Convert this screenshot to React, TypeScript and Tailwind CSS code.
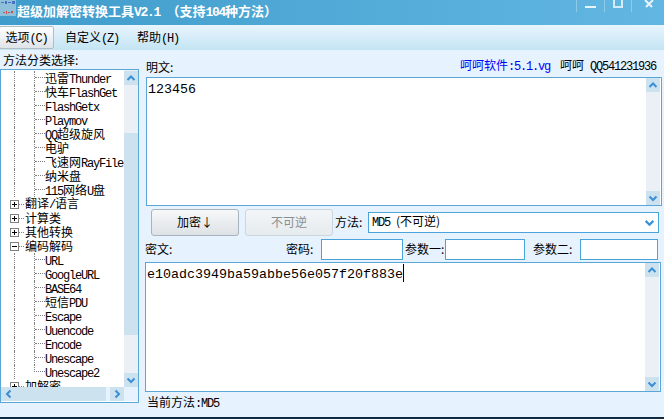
import React from "react";

// latin runs are squeezed to the 6px cell of the old bitmap font
function T({ text, big }: { text: string; big?: boolean }) {
  const parts = text.split(/([\x00-\x7f]+)/).filter(Boolean);
  return (
    <>
      {parts.map((p, i) =>
        /^[\x00-\x7f]+$/.test(p) ? (
          <span
            key={i}
            className={
              big
                ? "[font-family:'Liberation_Mono',monospace] text-[13.33px] whitespace-pre"
                : "[font-family:'Liberation_Mono',monospace] text-[12px] tracking-[-1.2px] whitespace-pre"
            }
          >
            {p}
          </span>
        ) : (
          <span key={i}>{p}</span>
        )
      )}
    </>
  );
}

function Chevron({ dir, size = 10 }: { dir: "up" | "down" | "left" | "right"; size?: number }) {
  const d = {
    up: "M1.5 7 L5 3.5 L8.5 7",
    down: "M1.5 3.5 L5 7 L8.5 3.5",
    left: "M6.5 1.5 L3 5 L6.5 8.5",
    right: "M3.5 1.5 L7 5 L3.5 8.5",
  }[dir];
  return (
    <svg width={size} height={size} viewBox="0 0 10 10" fill="none">
      <path d={d} stroke="#3a8fd6" strokeWidth="2" />
    </svg>
  );
}

function ScrollBtn({ dir }: { dir: "up" | "down" }) {
  return (
    <div className="flex h-[14px] w-[14px] items-center justify-center bg-[#cde2ef]">
      <Chevron dir={dir} />
    </div>
  );
}

function Expander({ open }: { open?: boolean }) {
  return (
    <svg width="9" height="9" viewBox="0 0 9 9" className="ml-[9px] shrink-0">
      <rect x="0.5" y="0.5" width="8" height="8" fill="#fff" stroke="#808080" />
      <path d={open ? "M2 4.5 H7" : "M2 4.5 H7 M4.5 2 V7"} stroke="#000" />
    </svg>
  );
}

function Child({ text, last }: { text: string; last?: boolean }) {
  return (
    <div className="flex h-[14px] items-start">
      <div className="ml-[13px] h-full w-[20px] border-l border-dotted border-[#808080]" />
      {last ? (
        <div className="h-[7px] w-[11px] border-b border-l border-dotted border-[#808080]" />
      ) : (
        <div className="h-full w-[11px] border-l border-dotted border-[#808080]">
          <div className="h-[7px] border-b border-dotted border-[#808080]" />
        </div>
      )}
      <span className="whitespace-nowrap leading-[14px]">
        <T text={text} />
      </span>
    </div>
  );
}

function Group({ text, open }: { text: string; open?: boolean }) {
  return (
    <div className="flex h-[14px] items-center">
      <Expander open={open} />
      <div className="mr-px w-[5px] border-b border-dotted border-[#808080]" />
      <span className="whitespace-nowrap leading-[14px]">
        <T text={text} />
      </span>
    </div>
  );
}

function TextBox({ className, children }: { className: string; children?: React.ReactNode }) {
  return (
    <div className={`flex border border-[#5aa6d6] bg-white ${className}`}>
      <div className="flex-1 px-[1px] pt-[1px] text-[13px] leading-[18px]">{children}</div>
      <div className="mr-px flex w-[14px] flex-col justify-between bg-[#eaf0f6]">
        <ScrollBtn dir="up" />
        <ScrollBtn dir="down" />
      </div>
    </div>
  );
}

function Field({ className }: { className: string }) {
  return <div className={`h-[21px] border border-[#4ba3dc] bg-white ${className}`} />;
}

export default function App() {
  return (
    <div className="flex h-[419px] w-[664px] flex-col overflow-hidden bg-[#e6f2fd] text-[12px] text-black [font-family:'Noto_Sans_CJK_SC','Noto_Sans_CJK_JP',sans-serif]">
      {/* title bar */}
      <div className="flex h-[25px] shrink-0 items-start bg-gradient-to-r from-[#3f9ccb] to-[#62b7e2]">
        <svg width="16" height="16" viewBox="0 0 16 16" className="shrink-0">
          <rect width="16" height="16" fill="#8fc0da" />
          <path d="M1 2h3v1H1zM5 1h2v3H5zM8 2h3v1H8zM12 1h3v3h-3z" fill="#4a6fc0" />
          <path d="M3 12h2v1H3zM6 11h1v3H6zM8 12h2v1H8zM11 11h2v2h-2z" fill="#c8504a" />
        </svg>
        <div className="ml-px mt-[2px] flex-1 whitespace-pre text-[13px] font-bold leading-[18px] text-white">
          超级加解密转换工具<span className="[font-family:'Liberation_Mono',monospace] tracking-[-1.3px]">V2.1 </span>
          （支持<span className="[font-family:'Liberation_Mono',monospace] tracking-[-1.3px]">104</span>种方法）
        </div>
        <div className="flex h-[12px] w-[88px] shrink-0">
          <div className="flex w-[28px] justify-center border-l border-white/30 pt-[6px]">
            <div className="h-[2px] w-[11px] bg-[#e8f4fb]" />
          </div>
          <div className="flex w-[27px] justify-center border-l border-white/30">
            <div className="h-[8px] w-[10px] border-2 border-t-0 border-[#d5ebf7]" />
          </div>
          <div className="flex w-[33px] justify-center border-l border-white/30">
            <svg width="10" height="8" viewBox="0 0 10 8" className="ml-[2px]">
              <path d="M1 0 L8 7 M9 0 L2 7" stroke="#e8f4fb" strokeWidth="2" />
            </svg>
          </div>
        </div>
      </div>

      {/* menu bar */}
      <div className="flex h-[25px] shrink-0 items-center bg-gradient-to-b from-[#e8f5fe] to-[#c3e4f3]">
        <div className="ml-[-1px] flex h-[23px] w-[55px] items-center justify-center rounded-[2px] border border-[#b4bcc4] bg-gradient-to-b from-white to-[#dfe4e8]">
          <span>
            选项<T text="(C)" />
          </span>
        </div>
        <div className="ml-[11px]">
          自定义<T text="(Z)" />
        </div>
        <div className="ml-[18px]">
          帮助<T text="(H)" />
        </div>
      </div>

      {/* body */}
      <div className="flex h-[367px] shrink-0">
        <div className="w-[139px] shrink-0">
          <div className="h-[19px] pl-[3px] pt-[2px] leading-[16px]">方法分类选择:</div>
          <div className="h-[334px] border border-[#5aa6d6] bg-white">
            <div className="flex h-[317px]">
              <div className="h-full w-[123px] overflow-hidden pt-px">
                <Child text="迅雷Thunder" />
                <Child text="快车FlashGet" />
                <Child text="FlashGetx" />
                <Child text="Playmov" />
                <Child text="QQ超级旋风" />
                <Child text="电驴" />
                <Child text="飞速网RayFile" />
                <Child text="纳米盘" />
                <Child text="115网络U盘" />
                <Group text="翻译/语言" />
                <Group text="计算类" />
                <Group text="其他转换" />
                <Group text="编码解码" open />
                <Child text="URL" />
                <Child text="GoogleURL" />
                <Child text="BASE64" />
                <Child text="短信PDU" />
                <Child text="Escape" />
                <Child text="Uuencode" />
                <Child text="Encode" />
                <Child text="Unescape" />
                <Child text="Unescape2" last />
                <Group text="加解密" />
              </div>
              <div className="flex w-[14px] flex-col bg-[#eaf0f6] pt-px">
                <ScrollBtn dir="up" />
                <div className="mt-[48px] h-[202px] bg-[#cde2ef]" />
                <div className="mt-[38px]">
                  <ScrollBtn dir="down" />
                </div>
              </div>
            </div>
            <div className="flex h-[14px] bg-[#e6f2fd]">
              <div className="flex h-full w-[105px] items-center bg-[#cde2ef] pl-[3px]">
                <Chevron dir="left" />
              </div>
              <div className="ml-[4px] flex h-full w-[14px] items-center justify-center bg-[#cde2ef]">
                <Chevron dir="right" />
              </div>
            </div>
          </div>
        </div>

        <div className="ml-[6px] flex w-[517px] shrink-0 flex-col">
          <div className="flex h-[27px] items-end justify-between pb-[2px] pl-px pr-[6px] leading-[16px]">
            <span>明文:</span>
            <span>
              <span className="text-[#0000ff]">
                呵呵软件<T text=":5.1.vg" />
              </span>
              <span className="ml-[10px]">呵呵</span>
              <span className="ml-[6px]">
                <T text="QQ541231936" />
              </span>
            </span>
          </div>
          <TextBox className="ml-px h-[129px] w-[516px]">
            <T big text="123456" />
          </TextBox>
          <div className="mt-[2px] flex h-[28px] items-center">
            <button className="ml-[6px] h-[27px] w-[88px] rounded-[3px] border border-[#a9b3bb] bg-gradient-to-b from-[#f7f8f9] to-[#dde2e6]">
              加密↓
            </button>
            <button className="ml-[6px] h-[27px] w-[88px] rounded-[3px] border border-[#ccd5db] bg-gradient-to-b from-[#f3f6f8] to-[#e6ebee] text-[#8a8f92]">
              不可逆
            </button>
            <span className="ml-[2px] w-[33px]">方法:</span>
            <div className="flex h-[21px] w-[291px] items-center justify-between border border-[#4ba3dc] bg-white pl-[3px] pr-[3px]">
              <span>
                <T text="MD5 " />
                (不可逆)
              </span>
              <Chevron dir="down" size={11} />
            </div>
          </div>
          <div className="flex h-[26px] items-center">
            <span className="w-[28px]">密文:</span>
            <span className="ml-[113px] w-[35px]">密码:</span>
            <Field className="w-[82px]" />
            <span className="ml-[2px] w-[40px]">参数一:</span>
            <Field className="w-[80px]" />
            <span className="ml-[8px] w-[47px]">参数二:</span>
            <Field className="w-[78px]" />
          </div>
          <TextBox className="h-[130px] w-[516px]">
            <span className="inline-block h-[18px] border-r border-black align-top">
              <T big text="e10adc3949ba59abbe56e057f20f883e" />
            </span>
          </TextBox>
          <div className="pl-[2px] pt-[2px] leading-[16px]">
            当前方法<T text=":MD5" />
          </div>
        </div>
      </div>

      <div className="h-[2px] shrink-0 bg-[#0f2a40]" />
    </div>
  );
}
